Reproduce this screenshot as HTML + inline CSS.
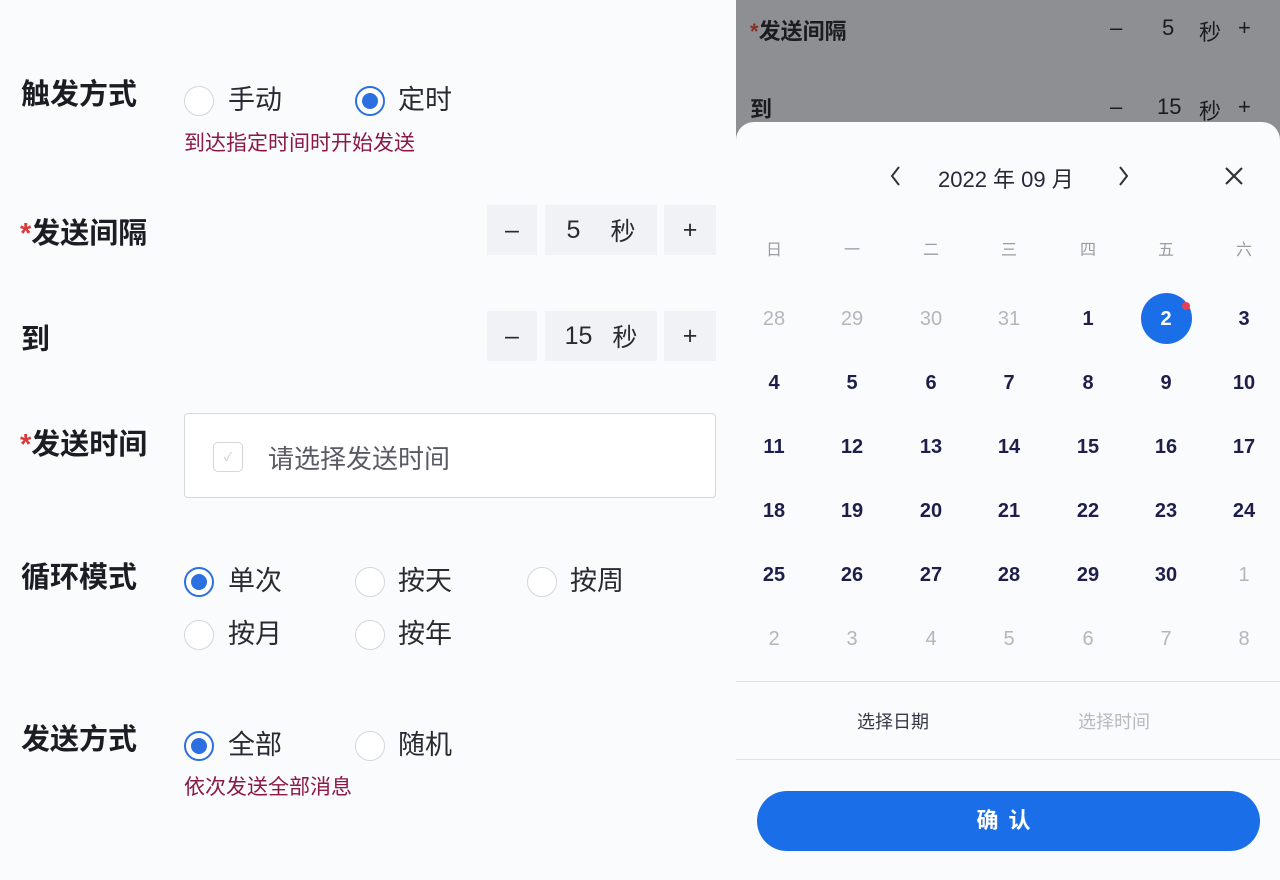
<!DOCTYPE html>
<html><head><meta charset="utf-8"><style>
*{margin:0;padding:0;box-sizing:border-box}
body{width:1280px;height:880px;background:#fafbfd;position:relative;overflow:hidden;font-family:"Liberation Sans","Noto Sans CJK SC",sans-serif;color:#1e1e28}
.a{position:absolute;white-space:nowrap}
.lbl{font-size:29px;font-weight:bold;color:#1c1c24;line-height:36px}
.star{color:#d83a3a}
.r{position:absolute;width:30px;height:30px;border-radius:50%;border:1.5px solid #d4d6dc;background:#fff}
.r.on{border:2px solid #2b6fe0}
.r.on::after{content:"";position:absolute;left:5px;top:5px;width:16px;height:16px;border-radius:50%;background:#2b6fe0}
.rt{font-size:27px;color:#2a2a33;line-height:32px}
.hint{font-size:21px;color:#8a1848;line-height:26px}
.box{position:absolute;background:#f1f2f5;font-size:25px;color:#2a2a33;display:flex;align-items:center;justify-content:center}
.ov{position:absolute;left:736px;top:0;width:544px;height:880px;background:#8e8f93}
.pop{position:absolute;left:736px;top:122px;width:544px;height:758px;background:#fafbfd;border-radius:18px 18px 0 0}
.c{position:absolute;width:60px;text-align:center;font-size:20px;font-weight:bold;color:#1d1f4a;line-height:24px}
.c.g{color:#b4b6bc;font-weight:normal}
.w{position:absolute;width:60px;text-align:center;font-size:16px;color:#9a9ca4}
</style></head><body>
<div class="a lbl" style="left:21px;top:77px">触发方式</div>
<div class="r" style="left:184px;top:86px"></div><div class="a rt" style="left:228px;top:84px">手动</div>
<div class="r on" style="left:355px;top:86px"></div><div class="a rt" style="left:398px;top:84px">定时</div>
<div class="a hint" style="left:184px;top:131px">到达指定时间时开始发送</div>

<div class="a lbl" style="left:20px;top:216px"><span class="star">*</span>发送间隔</div>
<div class="box" style="left:487px;top:205px;width:50px;height:50px">–</div>
<div class="box" style="left:545px;top:205px;width:112px;height:50px"><span style="margin-right:30px">5</span>秒</div>
<div class="box" style="left:664px;top:205px;width:52px;height:50px">+</div>

<div class="a lbl" style="left:21px;top:322px">到</div>
<div class="box" style="left:487px;top:311px;width:50px;height:50px">–</div>
<div class="box" style="left:545px;top:311px;width:112px;height:50px"><span style="margin-right:20px">15</span>秒</div>
<div class="box" style="left:664px;top:311px;width:52px;height:50px">+</div>

<div class="a lbl" style="left:20px;top:427px"><span class="star">*</span>发送时间</div>
<div class="a" style="left:184px;top:413px;width:532px;height:85px;border:1.5px solid #d6d8de;border-radius:4px;background:#fff"></div>
<div class="a" style="left:213px;top:442px;width:30px;height:30px;border:1.5px solid #d4d6dc;border-radius:5px;color:#ccc;font-size:12px;text-align:center;line-height:28px">✓</div>
<div class="a" style="left:268px;top:439px;font-size:26px;color:#5a5a66">请选择发送时间</div>

<div class="a lbl" style="left:21px;top:560px">循环模式</div>
<div class="r on" style="left:184px;top:567px"></div><div class="a rt" style="left:228px;top:565px">单次</div>
<div class="r" style="left:355px;top:567px"></div><div class="a rt" style="left:398px;top:565px">按天</div>
<div class="r" style="left:527px;top:567px"></div><div class="a rt" style="left:570px;top:565px">按周</div>
<div class="r" style="left:184px;top:620px"></div><div class="a rt" style="left:228px;top:618px">按月</div>
<div class="r" style="left:355px;top:620px"></div><div class="a rt" style="left:398px;top:618px">按年</div>

<div class="a lbl" style="left:21px;top:722px">发送方式</div>
<div class="r on" style="left:184px;top:731px"></div><div class="a rt" style="left:228px;top:729px">全部</div>
<div class="r" style="left:355px;top:731px"></div><div class="a rt" style="left:398px;top:729px">随机</div>
<div class="a hint" style="left:184px;top:775px">依次发送全部消息</div>

<div class="ov"></div>
<div class="a lbl" style="left:750px;top:14px;font-size:22px;color:#1c1c20"><span style="color:#8a3020">*</span>发送间隔</div>
<div class="a" style="left:1110px;top:15px;font-size:22px;color:#1c1c20">–</div>
<div class="a" style="left:1162px;top:15px;font-size:22px;color:#1c1c20">5</div>
<div class="a" style="left:1199px;top:15px;font-size:22px;color:#1c1c20">秒</div>
<div class="a" style="left:1238px;top:15px;font-size:22px;color:#1c1c20">+</div>
<div class="a lbl" style="left:750px;top:92px;font-size:22px;color:#1c1c20">到</div>
<div class="a" style="left:1110px;top:94px;font-size:22px;color:#1c1c20">–</div>
<div class="a" style="left:1157px;top:94px;font-size:22px;color:#1c1c20">15</div>
<div class="a" style="left:1199px;top:94px;font-size:22px;color:#1c1c20">秒</div>
<div class="a" style="left:1238px;top:94px;font-size:22px;color:#1c1c20">+</div>

<div class="pop"></div>
<svg class="a" style="left:886px;top:164px" width="20" height="24"><path d="M13 3 L6 12 L13 21" stroke="#333" stroke-width="2" fill="none"/></svg>
<div class="a" style="left:938px;top:162px;font-size:22px;color:#2a2638">2022 年 09 月</div>
<svg class="a" style="left:1114px;top:164px" width="20" height="24"><path d="M6 3 L13 12 L6 21" stroke="#333" stroke-width="2" fill="none"/></svg>
<svg class="a" style="left:1222px;top:164px" width="24" height="24"><path d="M4 4 L20 20 M20 4 L4 20" stroke="#333" stroke-width="2.2" fill="none"/></svg>

<div class="w" style="left:744px;top:236px">日</div><div class="w" style="left:822px;top:236px">一</div><div class="w" style="left:901px;top:236px">二</div><div class="w" style="left:979px;top:236px">三</div><div class="w" style="left:1058px;top:236px">四</div><div class="w" style="left:1136px;top:236px">五</div><div class="w" style="left:1214px;top:236px">六</div>

<div class="a" style="left:1141px;top:293px;width:51px;height:51px;border-radius:50%;background:#1a6fe8"></div>
<div class="a" style="left:1182px;top:302px;width:8px;height:8px;border-radius:50%;background:#e84050"></div>

<div id="cal"></div>
<script>
var xs=[744,822,901,979,1058,1136,1214],ys=[307,371,435,499,563,627];
var d=[[28,'g'],[29,'g'],[30,'g'],[31,'g']];for(var i=1;i<=30;i++)d.push([i,'']);for(i=1;i<=8;i++)d.push([i,'g']);
var h='';d.forEach(function(v,k){var c=k%7,r=Math.floor(k/7);h+='<div class="c '+v[1]+'" style="left:'+xs[c]+'px;top:'+ys[r]+'px;'+(k==5?'color:#fff':'')+'">'+v[0]+'</div>';});
document.getElementById('cal').innerHTML=h;
</script>

<div class="a" style="left:736px;top:681px;width:544px;height:1px;background:#dfe1e6"></div>
<div class="a" style="left:857px;top:708px;font-size:18px;color:#3a3848">选择日期</div>
<div class="a" style="left:1078px;top:708px;font-size:18px;color:#b8bac0">选择时间</div>
<div class="a" style="left:736px;top:759px;width:544px;height:1px;background:#dfe1e6"></div>
<div class="a" style="left:757px;top:791px;width:503px;height:60px;border-radius:30px;background:#1a6fe8;color:#fff;font-size:22px;font-weight:bold;text-align:center;line-height:60px;letter-spacing:10px">确认</div>
</body></html>
